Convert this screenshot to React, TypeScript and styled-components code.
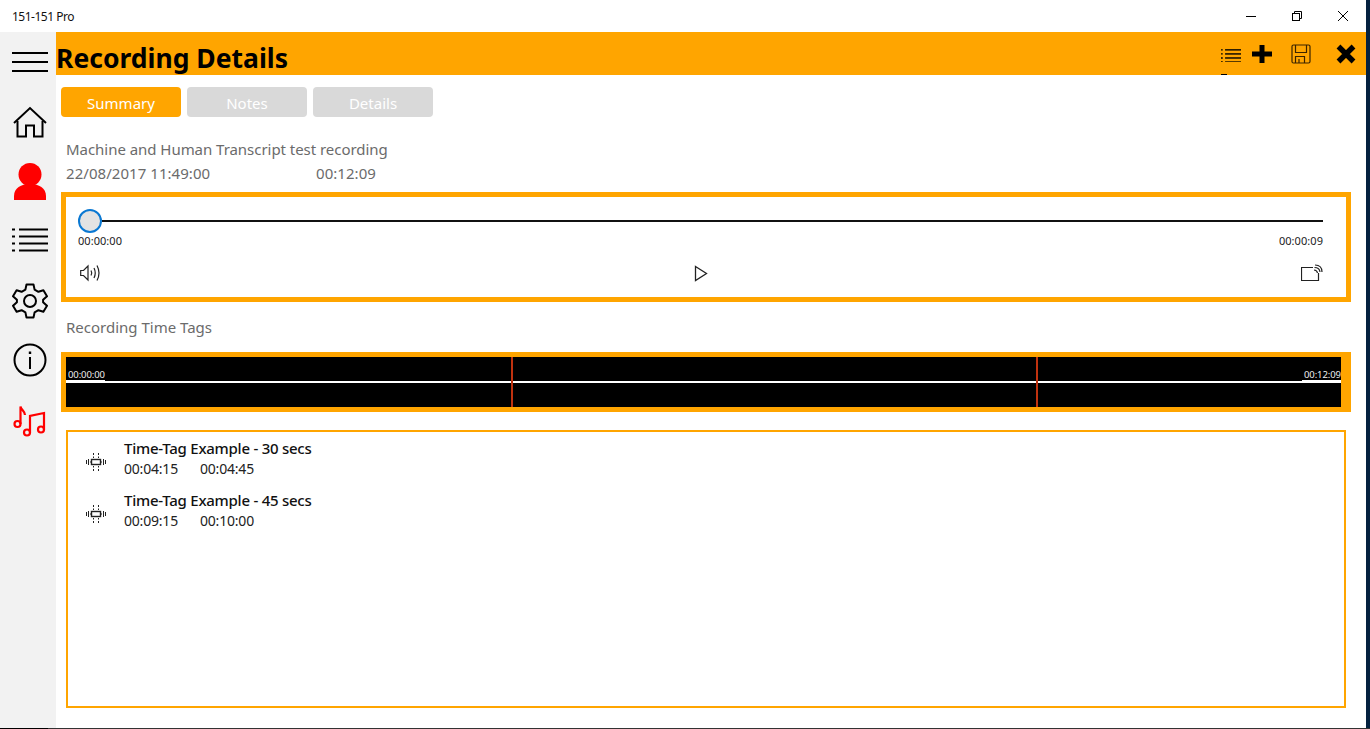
import { createGlobalStyle, styled } from "styled-components";

const ORANGE = "#ffa500";
const FONT = `"Noto Sans", "Open Sans", "Liberation Sans", sans-serif`;

const GlobalStyle = createGlobalStyle`
  html, body {
    margin: 0;
    padding: 0;
    background: #fff;
    overflow: hidden;
  }
  * {
    box-sizing: border-box;
  }
`;

const Screen = styled.div`
  width: 1370px;
  height: 729px;
  display: flex;
  flex-direction: column;
  font-family: ${FONT};
  background: #fff;
`;

const Window = styled.div`
  flex: 1;
  min-height: 0;
  display: flex;
`;

const WindowInner = styled.div`
  width: 1366px;
  display: flex;
  flex-direction: column;
`;

const DesktopEdge = styled.div`
  width: 4px;
  background: #04213f;
`;

const TaskbarEdge = styled.div`
  height: 1px;
  display: flex;
  background: #333;
`;

const TaskbarStart = styled.div`
  width: 48px;
  background: #000;
`;

const TitleBar = styled.div`
  height: 32px;
  display: flex;
  align-items: center;
  justify-content: space-between;
`;

const AppName = styled.span`
  padding-left: 12px;
  font-size: 12px;
  letter-spacing: -0.5px;
  color: #111;
`;

const WindowButtons = styled.div`
  display: flex;
`;

const WindowButton = styled.div`
  width: 46px;
  height: 32px;
  display: flex;
  align-items: center;
  justify-content: center;
`;

const Body = styled.div`
  flex: 1;
  min-height: 0;
  display: flex;
`;

const Sidebar = styled.nav`
  width: 56px;
  background: #f2f2f2;
  display: flex;
  flex-direction: column;
`;

const SideIcon = styled.div<{ $height: number }>`
  width: 56px;
  height: ${(p) => p.$height}px;
  padding-left: 4px;
  display: flex;
  align-items: center;
  justify-content: center;
`;

const Main = styled.main`
  flex: 1;
  min-width: 0;
  display: flex;
  flex-direction: column;
`;

const Header = styled.header`
  height: 43px;
  background: ${ORANGE};
  display: flex;
  align-items: center;
  justify-content: space-between;
`;

const Title = styled.h1`
  margin: 0;
  font-size: 26.5px;
  line-height: 43px;
  font-weight: 700;
  color: #000;
  padding-top: 10px;
`;

const HeaderActions = styled.div`
  display: flex;
  align-items: center;
`;

const HeaderAction = styled.div<{ $width: number; $drop?: number }>`
  position: relative;
  width: ${(p) => p.$width}px;
  height: 43px;
  padding-top: ${(p) => p.$drop ?? 0}px;
  display: flex;
  align-items: center;
  justify-content: center;
`;

const ActionTick = styled.span`
  position: absolute;
  left: 7px;
  bottom: 0;
  width: 6px;
  height: 1px;
  background: #000;
`;

const Content = styled.div`
  flex: 1;
  padding: 12px 15px 20px 5px;
  display: flex;
  flex-direction: column;
`;

const Tabs = styled.div`
  display: flex;
  gap: 6px;
`;

const Tab = styled.div<{ $active?: boolean }>`
  width: 120px;
  height: 30px;
  border-radius: 4px;
  background: ${(p) => (p.$active ? ORANGE : "#d9d9d9")};
  color: #fff;
  font-size: 15px;
  line-height: 33px;
  text-align: center;
`;

const RecordingName = styled.div`
  margin: 21px 0 0 5px;
  height: 22px;
  font-size: 15px;
  line-height: 22px;
  color: #6b6b6b;
  letter-spacing: -0.04px;
`;

const RecordingMeta = styled.div`
  margin: 2px 0 0 5px;
  height: 22px;
  display: flex;
  font-size: 15px;
  line-height: 22px;
  color: #6b6b6b;
  letter-spacing: 0.05px;
`;

const MetaDate = styled.span`
  width: 250px;
`;

const Player = styled.section`
  margin-top: 8px;
  height: 110px;
  border: 5px solid ${ORANGE};
  padding: 12px 23px 0 12px;
  display: flex;
  flex-direction: column;
`;

const Slider = styled.div`
  height: 24px;
  display: flex;
  align-items: center;
`;

const Thumb = styled.div`
  width: 24px;
  height: 24px;
  border-radius: 50%;
  background: #e3e3e3;
  border: 2px solid #0a78d2;
  flex-shrink: 0;
`;

const Track = styled.div`
  flex: 1;
  height: 2px;
  background: #111;
`;

const SliderTimes = styled.div`
  display: flex;
  justify-content: space-between;
  height: 16px;
  font-size: 11px;
  line-height: 16px;
  color: #222;
  letter-spacing: 0.05px;
`;

const Controls = styled.div`
  display: flex;
  align-items: center;
  justify-content: space-between;
  margin-top: 12px;
  height: 24px;
`;

const SectionLabel = styled.div`
  margin: 14px 0 0 5px;
  height: 22px;
  font-size: 15px;
  line-height: 22px;
  color: #6b6b6b;
`;

const TimelineFrame = styled.section`
  margin-top: 14px;
  height: 60px;
  border: 5px solid ${ORANGE};
  border-right-width: 10px;
`;

const Timeline = styled.div`
  position: relative;
  height: 50px;
  background: #000;
`;

const TimelineLine = styled.div`
  position: absolute;
  left: 0;
  right: 0;
  top: 24px;
  height: 2px;
  background: #fff;
`;

const TimelineLabel = styled.span<{ $side: "left" | "right" }>`
  position: absolute;
  top: 13px;
  ${(p) => p.$side}: 0;
  width: 39px;
  padding: 0 2px;
  border-bottom: 1px solid #fff;
  font-size: 9.5px;
  line-height: 10px;
  color: #eee;
  letter-spacing: -0.1px;
  white-space: nowrap;
`;

const TagMarker = styled.div`
  position: absolute;
  top: 0;
  bottom: 0;
  width: 2px;
  background: #c0320f;
`;

const TagList = styled.section`
  margin: 18px 5px 0 5px;
  height: 278px;
  border: 2px solid ${ORANGE};
  padding: 1px 0 0 0;
`;

const TagRow = styled.div`
  height: 52px;
  display: flex;
  align-items: center;
`;

const TagIcon = styled.div`
  width: 56px;
  display: flex;
  justify-content: center;
  padding-top: 6px;
`;

const TagText = styled.div`
  display: flex;
  flex-direction: column;
`;

const TagTitle = styled.div`
  font-size: 15px;
  line-height: 19px;
  font-weight: 500;
  color: #111;
  letter-spacing: -0.25px;
`;

const TagTimes = styled.div`
  display: flex;
  padding-top: 1px;
  font-size: 14px;
  line-height: 20px;
  color: #222;
  letter-spacing: -0.2px;
`;

const TagStart = styled.span`
  width: 76px;
`;

const ListLines = ({ scale = 1, weight = 2 }: { scale?: number; weight?: number }) => (
  <svg width={36 * scale} height={24 * scale} viewBox="0 0 36 24" fill="none" stroke="#000">
    {[1.5, 8.5, 15.5, 22.5].map((y) => (
      <g key={y} strokeWidth={weight}>
        <path d={`M0 ${y}H3`} />
        <path d={`M7 ${y}H36`} />
      </g>
    ))}
  </svg>
);

const TagGlyph = () => (
  <svg width="22" height="18" viewBox="0 0 22 18" fill="none" stroke="#222" strokeWidth="1">
    <rect x="6.5" y="6.5" width="9" height="5" strokeWidth="1.4" />
    <path d="M1.5 7v4M3.5 6v6M18.5 6v6M20.5 7v4" />
    <path d="M8.5 0v2M8.5 3.5v1.5M8.5 13v1.5M8.5 16v2M13.5 0v2M13.5 3.5v1.5M13.5 13v1.5M13.5 16v2" />
    <path d="M5 9H6.5M15.5 9H17" />
  </svg>
);

export default function App() {
  return (
    <Screen>
      <GlobalStyle />
      <Window>
        <WindowInner>
          <TitleBar>
            <AppName>151-151 Pro</AppName>
            <WindowButtons>
              <WindowButton>
                <svg width="10" height="10" viewBox="0 0 10 10" stroke="#000" fill="none">
                  <path d="M0 5.5H10" />
                </svg>
              </WindowButton>
              <WindowButton>
                <svg width="10" height="10" viewBox="0 0 10 10" stroke="#000" fill="none">
                  <rect x="0.5" y="2.5" width="7" height="7" />
                  <path d="M2.5 2.5V0.5H9.5V7.5H7.5" />
                </svg>
              </WindowButton>
              <WindowButton>
                <svg width="10" height="10" viewBox="0 0 10 10" stroke="#000" fill="none">
                  <path d="M0 0L10 10M10 0L0 10" />
                </svg>
              </WindowButton>
            </WindowButtons>
          </TitleBar>
          <Body>
            <Sidebar>
              <SideIcon $height={60}>
                <svg width="36" height="20" viewBox="0 0 36 20" stroke="#000" strokeWidth="2" fill="none">
                  <path d="M0 1H36M0 10H36M0 19H36" />
                </svg>
              </SideIcon>
              <SideIcon $height={60}>
                <svg width="34" height="32" viewBox="0 0 34 32" stroke="#000" strokeWidth="2" fill="none">
                  <path d="M1 17L17 2L33 17" />
                  <path d="M4.5 15V30.5H13V19.5H21V30.5H29.5V15" />
                </svg>
              </SideIcon>
              <SideIcon $height={58}>
                <svg width="32" height="37" viewBox="0 0 32 37" fill="#f00">
                  <circle cx="16" cy="11.5" r="11.5" />
                  <path d="M0 37V33C0 25 7 21 16 21S32 25 32 33V37Z" />
                </svg>
              </SideIcon>
              <SideIcon $height={60}>
                <ListLines />
              </SideIcon>
              <SideIcon $height={62}>
                <svg width="36" height="36" viewBox="0 0 36 36" stroke="#000" strokeWidth="2" fill="none" strokeLinejoin="round">
                  <circle cx="18" cy="18" r="6" />
                  <path d="M14.5 1.5H21.5L22.6 6.6L26.4 8.8L31.4 7.2L35 13.2L31.1 16.8V19.2L35 22.8L31.4 28.8L26.4 27.2L22.6 29.4L21.5 34.5H14.5L13.4 29.4L9.6 27.2L4.6 28.8L1 22.8L4.9 19.2V16.8L1 13.2L4.6 7.2L9.6 8.8L13.4 6.6Z" />
                </svg>
              </SideIcon>
              <SideIcon $height={56}>
                <svg width="34" height="34" viewBox="0 0 34 34" stroke="#000" strokeWidth="2" fill="none">
                  <circle cx="17" cy="17" r="15.5" />
                  <path d="M17 14V26" />
                  <path d="M17 8.5V11" strokeWidth="2.4" />
                </svg>
              </SideIcon>
              <SideIcon $height={66}>
                <svg width="34" height="32" viewBox="0 0 34 32" stroke="#f00" strokeWidth="2.2" fill="none">
                  <circle cx="4.5" cy="19" r="3" />
                  <path d="M7.5 19V1.5C8 5 12 6 12 10" />
                  <circle cx="14" cy="27.5" r="3" />
                  <circle cx="28" cy="24.5" r="3" />
                  <path d="M17 27.5V11L31 8V24.5" />
                </svg>
              </SideIcon>
            </Sidebar>
            <Main>
              <Header>
                <Title>Recording Details</Title>
                <HeaderActions>
                  <HeaderAction $width={34} $drop={4}>
                    <ListLines scale={0.58} weight={2.4} />
                    <ActionTick />
                  </HeaderAction>
                  <HeaderAction $width={28}>
                    <svg width="20" height="20" viewBox="0 0 20 20" fill="#000">
                      <path d="M7.5 1H12.5V7.5H20V12.5H12.5V19H7.5V12.5H0V7.5H7.5Z" />
                    </svg>
                  </HeaderAction>
                  <HeaderAction $width={50}>
                    <svg width="20" height="20" viewBox="0 0 20 20" stroke="#3a2400" strokeWidth="1.2" fill="none">
                      <path d="M1 2.5Q1 1 2.5 1H17.5Q19 1 19 2.5V17.5Q19 19 17.5 19H2.5Q1 19 1 17.5Z" />
                      <path d="M4.5 1V8.5H15.5V1" />
                      <path d="M4.5 19V12.5H13.5V19M8 15V19" />
                    </svg>
                  </HeaderAction>
                  <HeaderAction $width={40}>
                    <svg width="20" height="20" viewBox="0 0 20 20" stroke="#000" strokeWidth="5.4" fill="none">
                      <path d="M2.5 2.5L17.5 17.5M17.5 2.5L2.5 17.5" />
                    </svg>
                  </HeaderAction>
                </HeaderActions>
              </Header>
              <Content>
                <Tabs>
                  <Tab $active>Summary</Tab>
                  <Tab>Notes</Tab>
                  <Tab>Details</Tab>
                </Tabs>
                <RecordingName>Machine and Human Transcript test recording</RecordingName>
                <RecordingMeta>
                  <MetaDate>22/08/2017 11:49:00</MetaDate>
                  <span>00:12:09</span>
                </RecordingMeta>
                <Player>
                  <Slider>
                    <Thumb />
                    <Track />
                  </Slider>
                  <SliderTimes>
                    <span>00:00:00</span>
                    <span>00:00:09</span>
                  </SliderTimes>
                  <Controls>
                    <svg width="23" height="18" viewBox="-2 0 23 18" stroke="#222" strokeWidth="1.2" fill="none">
                      <path d="M0.7 6.5H3.5L8 2V16L3.5 11.5H0.7Z" />
                      <path d="M11 6.5Q12.5 9 11 11.5" />
                      <path d="M14 4Q16.5 9 14 14" />
                      <path d="M17 1.5Q21 9 17 16.5" />
                    </svg>
                    <svg width="14" height="17" viewBox="0 0 14 17" stroke="#222" strokeWidth="1.3" fill="none">
                      <path d="M1.5 1.5L12.5 8.5L1.5 15.5Z" />
                    </svg>
                    <svg width="22" height="18" viewBox="0 0 22 18" stroke="#222" strokeWidth="1.2" fill="none">
                      <path d="M12 3.5H0.5V16.5H17.5V9" />
                      <path d="M13 6Q16 6 16.5 9M13.5 3.5Q18.5 3.5 19 8M14 1Q21 1 21 8" />
                    </svg>
                  </Controls>
                </Player>
                <SectionLabel>Recording Time Tags</SectionLabel>
                <TimelineFrame>
                  <Timeline>
                    <TimelineLine />
                    <TimelineLabel $side="left">00:00:00</TimelineLabel>
                    <TimelineLabel $side="right">00:12:09</TimelineLabel>
                    <TagMarker style={{ left: 445 }} />
                    <TagMarker style={{ left: 970 }} />
                  </Timeline>
                </TimelineFrame>
                <TagList>
                  <TagRow>
                    <TagIcon>
                      <TagGlyph />
                    </TagIcon>
                    <TagText>
                      <TagTitle>Time-Tag Example - 30 secs</TagTitle>
                      <TagTimes>
                        <TagStart>00:04:15</TagStart>
                        <span>00:04:45</span>
                      </TagTimes>
                    </TagText>
                  </TagRow>
                  <TagRow>
                    <TagIcon>
                      <TagGlyph />
                    </TagIcon>
                    <TagText>
                      <TagTitle>Time-Tag Example - 45 secs</TagTitle>
                      <TagTimes>
                        <TagStart>00:09:15</TagStart>
                        <span>00:10:00</span>
                      </TagTimes>
                    </TagText>
                  </TagRow>
                </TagList>
              </Content>
            </Main>
          </Body>
        </WindowInner>
        <DesktopEdge />
      </Window>
      <TaskbarEdge>
        <TaskbarStart />
      </TaskbarEdge>
    </Screen>
  );
}
